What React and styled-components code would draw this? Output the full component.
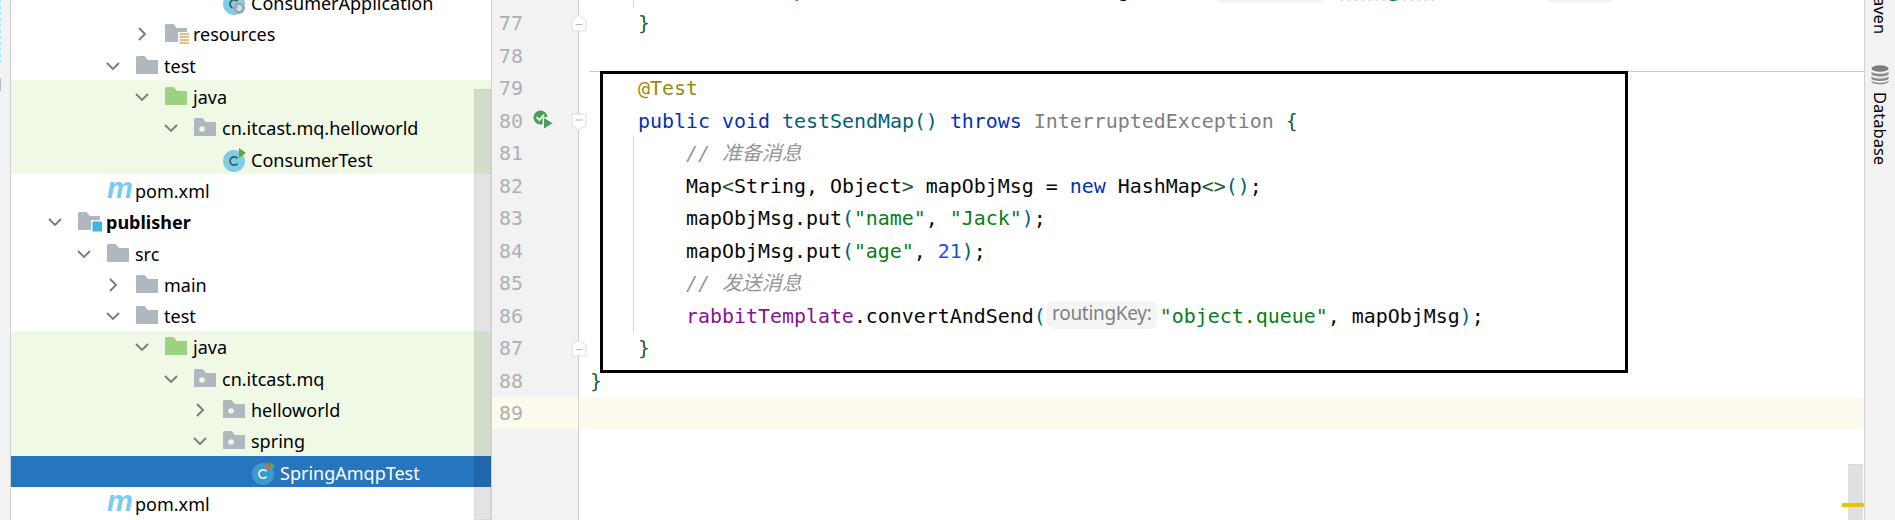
import React from "react";
import styled, { createGlobalStyle } from "styled-components";

const GlobalStyle = createGlobalStyle`
  html, body {
    margin: 0;
    padding: 0;
    background: #fff;
  }
`;

const sans = `"Noto Sans", "Open Sans", sans-serif`;
const mono = `"DejaVu Sans Mono", "Noto Sans CJK SC", monospace`;

const treeRows = [
  { depth: 5, icon: "app", label: "ConsumerApplication" },
  { depth: 3, arrow: "right", icon: "res", label: "resources" },
  { depth: 2, arrow: "down", icon: "folder", label: "test" },
  { depth: 3, arrow: "down", icon: "java", label: "java", tint: "green" },
  { depth: 4, arrow: "down", icon: "pkg", label: "cn.itcast.mq.helloworld", tint: "green" },
  { depth: 5, icon: "test", label: "ConsumerTest", tint: "green" },
  { depth: 1, icon: "pom", label: "pom.xml" },
  { depth: 0, arrow: "down", icon: "module", label: "publisher", bold: true },
  { depth: 1, arrow: "down", icon: "folder", label: "src" },
  { depth: 2, arrow: "right", icon: "folder", label: "main" },
  { depth: 2, arrow: "down", icon: "folder", label: "test" },
  { depth: 3, arrow: "down", icon: "java", label: "java", tint: "green" },
  { depth: 4, arrow: "down", icon: "pkg", label: "cn.itcast.mq", tint: "green" },
  { depth: 5, arrow: "right", icon: "pkg", label: "helloworld", tint: "green" },
  { depth: 5, arrow: "down", icon: "pkg", label: "spring", tint: "green" },
  { depth: 6, icon: "spring", label: "SpringAmqpTest", tint: "selected" },
  { depth: 1, icon: "pom", label: "pom.xml" },
];

const FOLDER = "M0 1.5Q0 0 1.5 0H8.5L12 4H22V18H0Z";

const Chevron = ({ dir }) => (
  <svg width="14" height="14" viewBox="0 0 14 14" fill="none" stroke="#7b7b7b" strokeWidth="1.9">
    {dir === "down" ? <path d="M1 4L7 10L13 4" /> : <path d="M4 1L10 7L4 13" />}
  </svg>
);

const Folder = ({ color = "#afb8bf", children }) => (
  <svg width="24" height="20" viewBox="0 0 24 20" style={{ overflow: "visible" }}>
    <path d={FOLDER} fill={color} />
    {children}
  </svg>
);

const ClassIcon = ({ disc = "#82cde6", letter = "#3d5a68", children }) => (
  <svg width="24" height="24" viewBox="0 0 24 24" style={{ overflow: "visible" }}>
    <circle cx="11" cy="13" r="11" fill={disc} />
    <path d="M14.5 10.4A4.2 4.2 0 1 0 14.5 15.6" fill="none" stroke={letter} strokeWidth="1.8" />
    {children}
  </svg>
);

const TreeIcon = ({ kind }) => {
  if (kind === "java") return <Folder color="#9cd27f" />;
  if (kind === "pkg")
    return (
      <Folder>
        <circle cx="8" cy="11" r="2.8" fill="#eff9e6" />
      </Folder>
    );
  if (kind === "res")
    return (
      <Folder>
        <rect x="13" y="8" width="11" height="12" fill="#fff" />
        <path d="M14.5 10H24M14.5 13H24M14.5 16H24M14.5 19H24" stroke="#e0a95c" strokeWidth="1.7" />
      </Folder>
    );
  if (kind === "module")
    return (
      <Folder>
        <rect x="13" y="8" width="11" height="12" fill="#fff" />
        <rect x="14.5" y="9.5" width="9.5" height="10" fill="#3fb3e2" />
      </Folder>
    );
  if (kind === "test")
    return (
      <ClassIcon>
        <path d="M16 0L23 5L16 10Z" fill="#5aa83c" />
      </ClassIcon>
    );
  if (kind === "spring")
    return (
      <ClassIcon disc="#3a9bd1" letter="#e8f3fa">
        <path d="M17 1L13 5L17 9Z" fill="#e0663a" />
        <path d="M18 1L23 5L18 9Z" fill="#59a869" />
      </ClassIcon>
    );
  if (kind === "app")
    return (
      <ClassIcon>
        <circle cx="16" cy="17" r="6.5" fill="#fff" opacity="0.5" />
        <circle cx="16" cy="17" r="4.5" fill="none" stroke="#9aa7b0" strokeWidth="3" />
      </ClassIcon>
    );
  if (kind === "pom") return <PomMark>m</PomMark>;
  return <Folder />;
};

const RunIcon = () => (
  <RunSvg width="20" height="19" viewBox="0 0 20 19">
    <path d="M7.5 0.5A7 7 0 1 0 9.5 14.2V7H14.4A7 7 0 0 0 7.5 0.5Z" fill="#4a9d5b" />
    <path d="M3.5 7.2L6.3 10L11 4.5" fill="none" stroke="#f2f2f2" strokeWidth="1.9" />
    <path d="M11 8L19.5 13.2L11 18.5Z" fill="#4a9d5b" />
  </RunSvg>
);

const FoldIcon = ({ flip, top }) => (
  <FoldSvg $top={top} width="16" height="18" viewBox="0 0 16 18">
    <path
      d={flip ? "M1 1H15V12L8 17L1 12Z" : "M1 17H15V6L8 1L1 6Z"}
      fill="#fff"
      stroke="#dcdcdc"
    />
    <path d={flip ? "M4.5 7H11.5" : "M4.5 10.5H11.5"} stroke="#b4b4b4" />
  </FoldSvg>
);

const DatabaseIcon = () => (
  <svg width="18" height="20" viewBox="0 0 18 20">
    <ellipse cx="9" cy="3.5" rx="8.5" ry="3.2" fill="#7d7d7d" />
    <path d="M0.5 6.5C2 9.5 16 9.5 17.5 6.5V9.2C16 12.2 2 12.2 0.5 9.2Z" fill="#8c8c8c" />
    <path d="M0.5 11.2C2 14.2 16 14.2 17.5 11.2V13.8C16 16.8 2 16.8 0.5 13.8Z" fill="#8c8c8c" />
    <path d="M0.5 15.6C2 18.6 16 18.6 17.5 15.6V16.6C16 20.4 2 20.4 0.5 16.6Z" fill="#8c8c8c" />
  </svg>
);

const App = () => {
  return (
    <Window>
      <GlobalStyle />
      <LeftStrip>
        <StripDots />
        <StripMark />
      </LeftStrip>

      <TreePane>
        <TreeList>
          {treeRows.map((row, i) => (
            <TreeRow key={i} $depth={row.depth} $tint={row.tint}>
              <ArrowSlot>{row.arrow && <Chevron dir={row.arrow} />}</ArrowSlot>
              <IconSlot>
                <TreeIcon kind={row.icon} />
              </IconSlot>
              <TreeLabel $bold={row.bold} $tint={row.tint}>
                {row.label}
              </TreeLabel>
            </TreeRow>
          ))}
        </TreeList>
        <TreeScrollbar />
      </TreePane>

      <Editor>
        <Gutter>
          {[76, 77, 78, 79, 80, 81, 82, 83, 84, 85, 86, 87, 88, 89].map((n) => (
            <GutterRow key={n} $current={n === 89}>
              {n}
              {n === 77 && <FoldIcon top={7} />}
              {n === 80 && <RunIcon />}
              {n === 80 && <FoldIcon flip top={9} />}
              {n === 87 && <FoldIcon top={7} />}
            </GutterRow>
          ))}
        </Gutter>

        <Code>
          <Line $guide $scrolled>
            {"        "}
            <Field>rabbitTemplate</Field>.convertAndSend<Paren>(</Paren>exchangeName,{" "}
            <Hint>routingKey:</Hint>
            <Str>
              "<Typo>shanghai</Typo>.news"
            </Str>
            ,{"  "}
            <Hint $narrow>object:</Hint>
          </Line>
          <Line>
            {"    "}
            <Brace>{"}"}</Brace>
          </Line>
          <Line $separator />
          <Line>
            {"    "}
            <Annotation>@Test</Annotation>
          </Line>
          <Line>
            {"    "}
            <Keyword>public</Keyword> <Keyword>void</Keyword> <Method>testSendMap</Method>
            <Paren>()</Paren> <Keyword>throws</Keyword> <Unused>InterruptedException</Unused>{" "}
            <Brace>{"{"}</Brace>
          </Line>
          <Line $guide>
            {"        "}
            <Comment>// 准备消息</Comment>
          </Line>
          <Line $guide>
            {"        "}Map<Brace>{"<"}</Brace>String, Object<Brace>{">"}</Brace> mapObjMsg ={" "}
            <Keyword>new</Keyword> HashMap<Brace>{"<>"}</Brace>
            <Paren>()</Paren>;
          </Line>
          <Line $guide>
            {"        "}mapObjMsg.put<Paren>(</Paren>
            <Str>"name"</Str>, <Str>"Jack"</Str>
            <Paren>)</Paren>;
          </Line>
          <Line $guide>
            {"        "}mapObjMsg.put<Paren>(</Paren>
            <Str>"age"</Str>, <Num>21</Num>
            <Paren>)</Paren>;
          </Line>
          <Line $guide>
            {"        "}
            <Comment>// 发送消息</Comment>
          </Line>
          <Line $guide>
            {"        "}
            <Field>rabbitTemplate</Field>.convertAndSend<Paren>(</Paren>
            <Hint>routingKey:</Hint>
            <Str>"object.queue"</Str>, mapObjMsg<Paren>)</Paren>;
          </Line>
          <Line>
            {"    "}
            <Brace>{"}"}</Brace>
          </Line>
          <Line>
            <Brace>{"}"}</Brace>
          </Line>
          <Line $current />
          <Highlight />
          <EditorScrollbar />
          <ErrorStripe />
        </Code>
      </Editor>

      <SideBar>
        <SideLabel>Maven</SideLabel>
        <SideIcon>
          <DatabaseIcon />
        </SideIcon>
        <SideLabel>Database</SideLabel>
      </SideBar>
    </Window>
  );
};

const Window = styled.div`
  display: flex;
  width: 1895px;
  height: 520px;
  overflow: hidden;
  background: #fff;
  color: #000;
`;

const LeftStrip = styled.div`
  position: relative;
  flex: none;
  width: 10px;
  background: #f2f2f2;
  border-right: 1px solid #d1d1d1;
`;

const StripDots = styled.div`
  position: absolute;
  left: 0;
  top: 0;
  width: 1px;
  height: 65px;
  background: repeating-linear-gradient(#a5e6ea 0 3px, transparent 3px 6px);
`;

const StripMark = styled.div`
  position: absolute;
  left: 0;
  top: 78px;
  width: 1px;
  height: 13px;
  background: #bdbdbd;
`;

const TreePane = styled.div`
  position: relative;
  flex: none;
  box-sizing: border-box;
  width: 481px;
  height: 520px;
  overflow: hidden;
  border-right: 1px solid #d1d1d1;
`;

const TreeList = styled.div`
  display: flex;
  flex-direction: column;
  margin-top: -13.5px;
`;

const tintBg = { green: "#eff9e6", selected: "#2675bf" };

const TreeRow = styled.div`
  display: flex;
  align-items: center;
  flex: none;
  box-sizing: border-box;
  height: 31.3px;
  padding-top: 2px;
  padding-left: ${(p) => 37 + p.$depth * 29}px;
  background: ${(p) => tintBg[p.$tint] || "transparent"};
`;

const ArrowSlot = styled.span`
  display: flex;
  flex: none;
  width: 14px;
  height: 14px;
  margin-right: 16px;
`;

const IconSlot = styled.span`
  display: flex;
  align-items: center;
  flex: none;
  width: 22px;
  height: 24px;
  margin-right: 6px;
`;

const TreeLabel = styled.span`
  font-family: ${sans};
  font-size: 18px;
  font-weight: ${(p) => (p.$bold ? 700 : 400)};
  color: ${(p) => (p.$tint === "selected" ? "#fff" : "#000")};
  white-space: nowrap;
`;

const PomMark = styled.span`
  font-family: "Liberation Sans", sans-serif;
  font-size: 29px;
  font-weight: 700;
  font-style: italic;
  line-height: 24px;
  color: #7ccbee;
  letter-spacing: -1px;
  margin-top: -5px;
`;

const TreeScrollbar = styled.div`
  position: absolute;
  left: 463px;
  top: 89px;
  bottom: 0;
  width: 15px;
  background: rgba(0, 0, 0, 0.11);
  border: 1px solid rgba(0, 0, 0, 0.04);
`;

const Editor = styled.div`
  display: flex;
  flex: 1;
  min-width: 0;
  height: 520px;
  overflow: hidden;
`;

const Gutter = styled.div`
  flex: none;
  box-sizing: border-box;
  width: 87px;
  height: 546px;
  margin-top: -25.75px;
  background: #f2f2f2;
  border-right: 1px solid #d0d0d0;
`;

const GutterRow = styled.div`
  position: relative;
  box-sizing: border-box;
  height: 32.5px;
  padding: 1.5px 0 0 7px;
  font-family: ${mono};
  font-size: 19.93px;
  line-height: 32.5px;
  color: #aeb0b2;
  background: ${(p) => (p.$current ? "#fcfaed" : "transparent")};
`;

const RunSvg = styled.svg`
  position: absolute;
  left: 41px;
  top: 6px;
`;

const FoldSvg = styled.svg`
  position: absolute;
  left: 79px;
  top: ${(p) => p.$top}px;
`;

const Code = styled.div`
  position: relative;
  flex: 1;
  min-width: 0;
  height: 546px;
  margin-top: -25.75px;
  font-family: ${mono};
  font-size: 19.93px;
  color: #080808;
`;

const Line = styled.div`
  position: relative;
  box-sizing: border-box;
  height: 32.5px;
  padding: ${(p) => (p.$scrolled ? "0.5px" : "1.5px")} 0 0 11px;
  line-height: 32.5px;
  white-space: pre;
  background: ${(p) => (p.$current ? "#fcfaed" : "transparent")};
  ${(p) => p.$separator && "box-shadow: inset 0 -1px 0 #c8c8c8; margin-left: 10px;"}

  &::before {
    content: ${(p) => (p.$guide ? '""' : "none")};
    position: absolute;
    left: 54px;
    top: 0;
    bottom: 0;
    width: 1px;
    background: #d3d8d8;
  }
`;

const Keyword = styled.span`
  color: #0033b3;
`;

const Method = styled.span`
  color: #00627a;
`;

const Str = styled.span`
  color: #067d17;
`;

const Num = styled.span`
  color: #1750eb;
`;

const Annotation = styled.span`
  color: #9e880d;
`;

const Comment = styled.span`
  color: #969696;
  font-style: italic;
`;

const Field = styled.span`
  color: #871094;
`;

const Unused = styled.span`
  color: #7f7f7f;
`;

const Paren = styled.span`
  color: #00627a;
`;

const Brace = styled.span`
  color: #1d5c2e;
`;

const Typo = styled.span`
  text-decoration: underline wavy #b4dcb0 1px;
  text-decoration-skip-ink: none;
  text-underline-offset: 0;
`;

const Hint = styled.span`
  display: inline-block;
  box-sizing: border-box;
  width: ${(p) => (p.$narrow ? 70 : 110)}px;
  height: 28px;
  margin: 0 3px 0 1px;
  border-radius: 7px;
  background: #f4f4f4;
  font-family: ${sans};
  font-size: 19px;
  line-height: 25px;
  text-align: center;
  color: #808080;
  vertical-align: 3px;
  letter-spacing: -0.3px;
`;

const Highlight = styled.div`
  position: absolute;
  left: 21px;
  top: 96.75px;
  width: 1028px;
  height: 302px;
  box-sizing: border-box;
  border: 3px solid #000;
  pointer-events: none;
`;

const EditorScrollbar = styled.div`
  position: absolute;
  right: 1px;
  top: 489.75px;
  width: 15px;
  height: 56px;
  background: #e0e0e0;
  border-top: 1px solid #d8d8d8;
`;

const ErrorStripe = styled.div`
  position: absolute;
  right: 0;
  top: 528.75px;
  width: 22px;
  height: 4px;
  background: #e6c400;
`;

const SideBar = styled.div`
  flex: none;
  box-sizing: border-box;
  display: flex;
  flex-direction: column;
  align-items: center;
  width: 31px;
  height: 520px;
  overflow: hidden;
  background: #f2f2f2;
  border-left: 1px solid #d0d0d0;
`;

const SideLabel = styled.span`
  flex: none;
  writing-mode: vertical-rl;
  font-family: ${sans};
  font-size: 16.5px;
  line-height: 20px;
  color: #000;
  white-space: nowrap;

  &:first-child {
    margin-top: -18px;
  }
`;

const SideIcon = styled.span`
  display: flex;
  flex: none;
  margin: 31px 0 7px;
`;

export default App;
